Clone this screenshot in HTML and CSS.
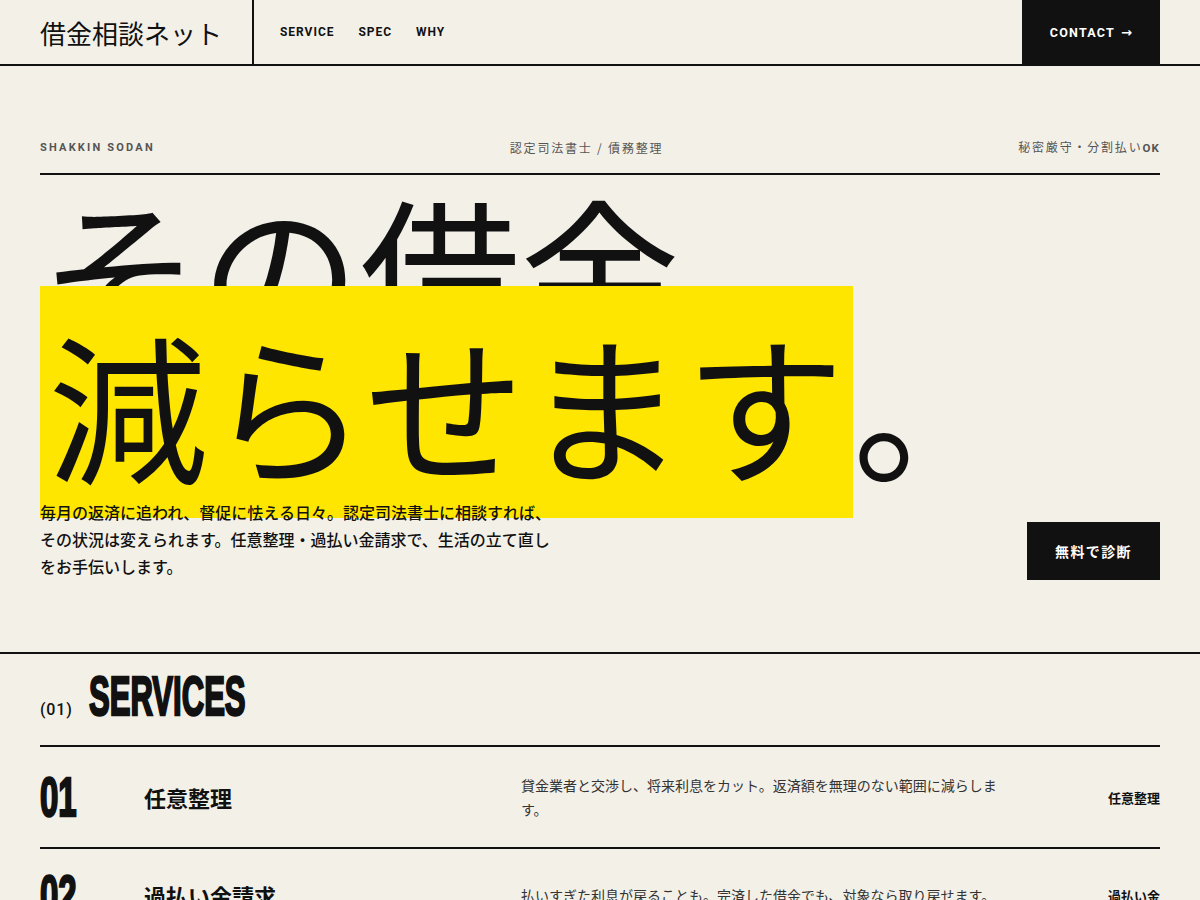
FILE: index.html
```html
<!DOCTYPE html>
<html lang="ja">
<head>
<meta charset="utf-8">
<title>借金相談ネット</title>
<link rel="stylesheet" href="styles.css">
</head>
<body>
<header class="site-header">
  <div class="logo">借金相談ネット</div>
  <nav class="nav">
    <a href="#service">SERVICE</a>
    <a href="#spec">SPEC</a>
    <a href="#why">WHY</a>
  </nav>
  <a class="contact" href="#contact">CONTACT <span class="arrow">→</span></a>
</header>

<section class="hero">
  <div class="meta">
    <span class="meta-en">SHAKKIN SODAN</span>
    <span class="meta-jp">認定司法書士 / 債務整理</span>
    <span class="meta-jp">秘密厳守・分割払い<span class="meta-latin">OK</span></span>
  </div>
  <h1 class="headline">その借金<br><span class="hl">減らせます</span>。</h1>
  <div class="hero-foot">
    <p class="lead">毎月の返済に追われ、督促に怯える日々。認定司法書士に相談すれば、その状況は変えられます。任意整理・過払い金請求で、生活の立て直しをお手伝いします。</p>
    <a class="btn" href="#contact">無料で診断</a>
  </div>
</section>

<section class="services" id="service">
  <div class="sec-head">
    <span class="sec-num">(01)</span>
    <h2 class="sec-title">SERVICES</h2>
  </div>
  <div class="row">
    <span class="num">01</span>
    <h3 class="title">任意整理</h3>
    <p class="desc">貸金業者と交渉し、将来利息をカット。返済額を無理のない範囲に減らします。</p>
    <span class="tag">任意整理</span>
  </div>
  <div class="row">
    <span class="num">02</span>
    <h3 class="title">過払い金請求</h3>
    <p class="desc">払いすぎた利息が戻ることも。完済した借金でも、対象なら取り戻せます。</p>
    <span class="tag">過払い金</span>
  </div>
</section>
</body>
</html>
```

FILE: styles.css
```css
* { box-sizing: border-box; }

body {
  margin: 0;
  background: #f3f0e8;
  color: #111;
  font-family: "Noto Sans CJK JP", "Noto Sans", sans-serif;
}

a { color: inherit; text-decoration: none; }

/* header */
.site-header {
  display: flex;
  height: 66px;
  border-bottom: 2px solid #111;
}
.logo {
  display: flex;
  align-items: center;
  padding: 0 30px 0 40px;
  border-right: 2px solid #111;
  font-size: 26px;
  font-weight: 400;
}
.nav {
  flex: 1;
  display: flex;
  align-items: center;
  gap: 24px;
  padding-left: 26px;
}
.nav a, .contact {
  font-family: Roboto, "Liberation Sans", sans-serif;
  font-weight: 700;
  font-size: 12px;
  letter-spacing: 0.08em;
}
.contact {
  display: flex;
  align-items: center;
  gap: 6px;
  margin-right: 40px;
  padding: 0 28px;
  background: #111;
  color: #fff;
  font-size: 12.5px;
  letter-spacing: 0.1em;
}
.arrow {
  font-family: "DejaVu Sans", sans-serif;
  font-size: 13px;
  letter-spacing: 0;
}

/* hero */
.hero {
  padding: 72px 40px 72px;
  border-bottom: 2px solid #111;
}
.meta {
  display: flex;
  justify-content: space-between;
  align-items: center;
  padding-bottom: 16px;
  border-bottom: 2px solid #111;
  color: #555;
  line-height: 18px;
}
.meta-en {
  font-family: Roboto, "Liberation Sans", sans-serif;
  font-weight: 700;
  font-size: 11px;
  letter-spacing: 0.2em;
}
.meta-jp {
  font-size: 12px;
  letter-spacing: 0.15em;
}
.meta-latin {
  font-family: Roboto, "Liberation Sans", sans-serif;
  font-weight: 700;
  font-size: 11.5px;
  letter-spacing: 0.1em;
}
.headline {
  margin: 23px 0 0;
  font-size: 160px;
  line-height: 136px;
  font-weight: 400;
}
.hl {
  background: #ffe600;
  padding: 0 8px 0 8px;
}
.hero-foot {
  display: flex;
  justify-content: space-between;
  align-items: flex-end;
  margin-top: 29px;
}
.lead {
  margin: 0;
  max-width: 520px;
  font-size: 16px;
  line-height: 27px;
  font-weight: 500;
}
.btn {
  padding: 19px 28px;
  background: #111;
  color: #fff;
  font-size: 14px;
  font-weight: 700;
  letter-spacing: 0.1em;
}

/* services */
.services {
  padding: 0 40px;
}
.sec-head {
  display: flex;
  align-items: baseline;
  gap: 16px;
  padding: 22px 0 26px;
  border-bottom: 2px solid #111;
}
.sec-num {
  font-family: Roboto, "Liberation Sans", sans-serif;
  font-size: 16px;
  font-weight: 500;
  letter-spacing: 0.05em;
}
.sec-title, .num {
  display: inline-block;
  margin: 0;
  font-family: "Liberation Sans", sans-serif;
  font-weight: 700;
  font-size: 55px;
  line-height: 40px;
  transform-origin: left center;
  -webkit-text-stroke: 2.5px #111;
}
.sec-title { transform: scaleX(0.565); }
.num { transform: scaleX(0.6); }
.row {
  display: grid;
  grid-template-columns: 80px 353px 1fr 60px;
  gap: 24px;
  align-items: center;
  padding: 26px 0;
  border-bottom: 2px solid #111;
}
.title {
  margin: 0;
  font-size: 22px;
  font-weight: 700;
  line-height: 30px;
}
.desc {
  margin: 0;
  max-width: 480px;
  font-size: 14px;
  line-height: 24px;
  color: #333;
}
.tag {
  justify-self: end;
  text-align: right;
  font-size: 13px;
  font-weight: 700;
}
```
